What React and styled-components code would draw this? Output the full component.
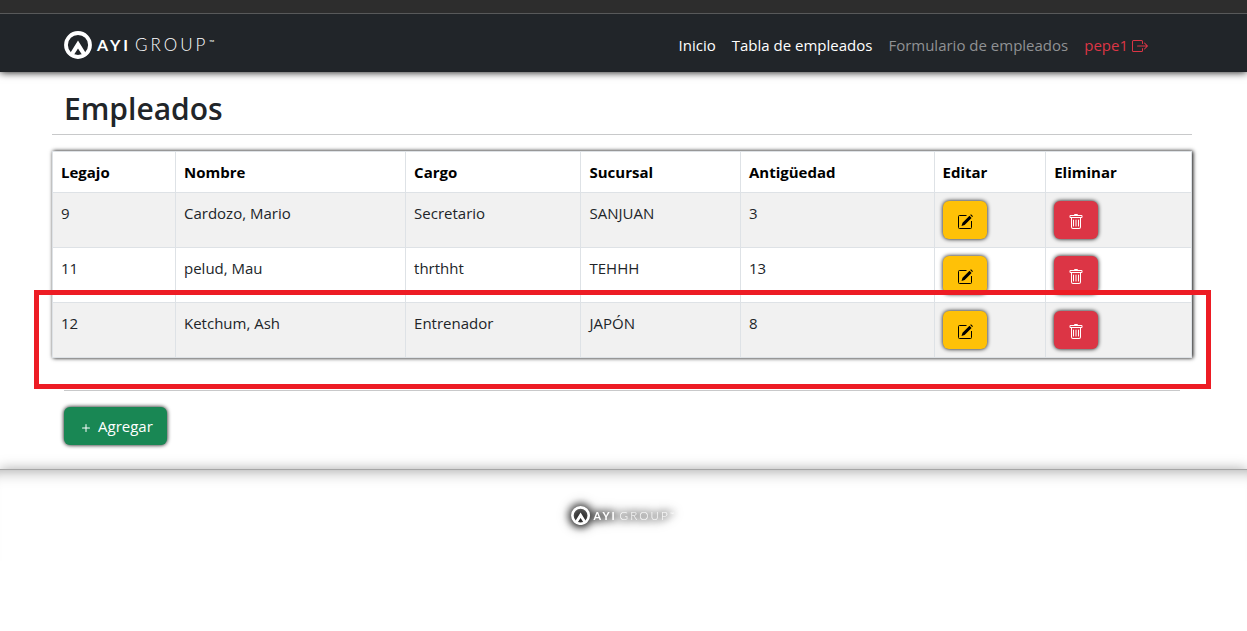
import React from "react";
import styled, { createGlobalStyle } from "styled-components";
import { BsBoxArrowRight, BsPlus, BsTrash } from "react-icons/bs";

const GlobalStyle = createGlobalStyle`
  *, *::before, *::after { box-sizing: border-box; }
  body {
    margin: 0;
    background: #fff;
    color: #212529;
    font-family: "Open Sans", "Noto Sans", sans-serif;
    font-size: 15px;
    line-height: 24px;
  }
`;

const TopStrip = styled.div`
  position: relative;
  z-index: 1;
  height: 14px;
  background: #2d2d2d;
  border-bottom: 1px solid #58595a;
`;

const Header = styled.header`
  display: flex;
  align-items: center;
  justify-content: space-between;
  min-height: 58px;
  padding: 3px 99px 0 64px;
  background: #212529;
  box-shadow: 0 0 8px #000;
`;

const Nav = styled.nav`
  display: flex;
  align-items: center;
  gap: 16px;
`;

const NavLink = styled.a`
  display: flex;
  align-items: center;
  gap: 4px;
  color: ${(p) => p.$color || "#fff"};
  text-decoration: none;
  white-space: nowrap;

  svg { margin-top: 3px; }
`;

const Main = styled.main`
  padding: 18px 55px 24px 52px;
`;

const Title = styled.h1`
  margin: 0;
  padding: 0 12px 6px;
  border-bottom: 1px solid #c8c9ca;
  font-size: 30px;
  font-weight: 600;
  line-height: 38px;
`;

const TableArea = styled.div`
  position: relative;
  margin-top: 16px;
`;

const Highlight = styled.div`
  position: absolute;
  right: -19px;
  bottom: -31px;
  left: -18px;
  height: 99px;
  border: 5px solid #ed1c24;
  pointer-events: none;
`;

const Table = styled.table`
  width: 100%;
  table-layout: fixed;
  border-collapse: collapse;
  box-shadow: 1px 0 4px #000;
  color: #212529;
`;

const Row = styled.tr`
  height: 55px;
  background: ${(p) => (p.$striped ? "#f1f1f1" : "#fff")};
`;

const HeadCell = styled.th`
  width: ${(p) => p.$width};
  height: 41px;
  padding: 8px;
  border: 1px solid #dee2e6;
  background: #fff;
  color: #000;
  font-weight: 700;
  text-align: left;
`;

const Cell = styled.td`
  padding: 8px;
  border: 1px solid #dee2e6;
  vertical-align: top;
`;

const Button = styled.button`
  display: flex;
  align-items: center;
  justify-content: center;
  gap: 4px;
  height: 38px;
  padding: 0 14px;
  border: 0;
  border-radius: 6px;
  background: ${(p) => p.$background};
  box-shadow: 0 0 4px #000;
  color: ${(p) => p.$color || "#fff"};
  font: inherit;
  cursor: pointer;

  svg { margin-top: 4px; }
`;

const Actions = styled.div`
  margin: 32px 12px 0;
  padding-top: 16px;
  border-top: 1px solid #c8c9ca;
`;

const Footer = styled.footer`
  display: flex;
  justify-content: center;
  padding: 36px 2px 36px 0;
  border-top: 1px solid #a5a5a5;
  box-shadow: 0 0 12px #aaa, inset 0 16px 16px -16px #999;
`;

const FooterLogo = styled.div`
  display: flex;
  filter: drop-shadow(0 0 4px #000) drop-shadow(0 0 4px #000);
`;

function Logo({ width }) {
  return (
    <svg width={width} viewBox="0 0 152 28" fill="#fff" role="img" aria-label="AYI Group">
      <circle cx="14" cy="14" r="12" fill="none" stroke="#fff" strokeWidth="3.8" />
      <path d="M14 9.5 23 24 19.5 26 14 17.5 8.5 26 5 24Z" />
      <g fontFamily="Lato, sans-serif" fontSize="17">
        <text x="33" y="20" fontSize="16" fontWeight="700" letterSpacing="3">AYI</text>
        <text x="71" y="20" fontWeight="300" letterSpacing="3">GROUP</text>
        <text x="145" y="14" fontSize="7">™</text>
      </g>
    </svg>
  );
}

function PencilIcon() {
  return (
    <svg width="16" height="16" viewBox="0 0 16 16" aria-hidden="true">
      <path d="M9.5 1.5H2.5Q1.5 1.5 1.5 2.5V13.5Q1.5 14.5 2.5 14.5H13.5Q14.5 14.5 14.5 13.5V7" fill="none" stroke="currentColor" />
      <path d="M12.5 1.8 14.6 3.9 7.6 10.9 4.5 12 5.5 8.8ZM13.2 1.1 14 .3 16 2.3 15.2 3.1Z" fill="currentColor" />
    </svg>
  );
}

const columns = [
  ["Legajo", "10.8%"],
  ["Nombre", "20.2%"],
  ["Cargo", "15.4%"],
  ["Sucursal", "14%"],
  ["Antigüedad", "17%"],
  ["Editar", "9.8%"],
  ["Eliminar", "12.8%"],
];

const employees = [
  [9, "Cardozo, Mario", "Secretario", "SANJUAN", 3],
  [11, "pelud, Mau", "thrthht", "TEHHH", 13],
  [12, "Ketchum, Ash", "Entrenador", "JAPÓN", 8],
];

export default function App() {
  return (
    <>
      <GlobalStyle />
      <TopStrip />
      <Header>
        <Logo width={152} />
        <Nav>
          <NavLink href="#inicio">Inicio</NavLink>
          <NavLink href="#tabla">Tabla de empleados</NavLink>
          <NavLink href="#formulario" $color="#909294">Formulario de empleados</NavLink>
          <NavLink href="#salir" $color="#dc3545">
            pepe1 <BsBoxArrowRight size={16} />
          </NavLink>
        </Nav>
      </Header>
      <Main>
        <Title>Empleados</Title>
        <TableArea>
          <Table>
            <thead>
              <tr>
                {columns.map(([name, width]) => (
                  <HeadCell key={name} scope="col" $width={width}>{name}</HeadCell>
                ))}
              </tr>
            </thead>
            <tbody>
              {employees.map((employee, i) => (
                <Row key={employee[0]} $striped={i % 2 === 0}>
                  {employee.map((value, j) => <Cell key={j}>{value}</Cell>)}
                  <Cell>
                    <Button $background="#ffc107" $color="#000" aria-label={`Editar ${employee[1]}`}>
                      <PencilIcon />
                    </Button>
                  </Cell>
                  <Cell>
                    <Button $background="#dc3545" aria-label={`Eliminar ${employee[1]}`}>
                      <BsTrash size={16} />
                    </Button>
                  </Cell>
                </Row>
              ))}
            </tbody>
          </Table>
          <Highlight />
        </TableArea>
        <Actions>
          <Button $background="#198754">
            <BsPlus size={16} /> Agregar
          </Button>
        </Actions>
      </Main>
      <Footer>
        <FooterLogo><Logo width={104} /></FooterLogo>
      </Footer>
    </>
  );
}
